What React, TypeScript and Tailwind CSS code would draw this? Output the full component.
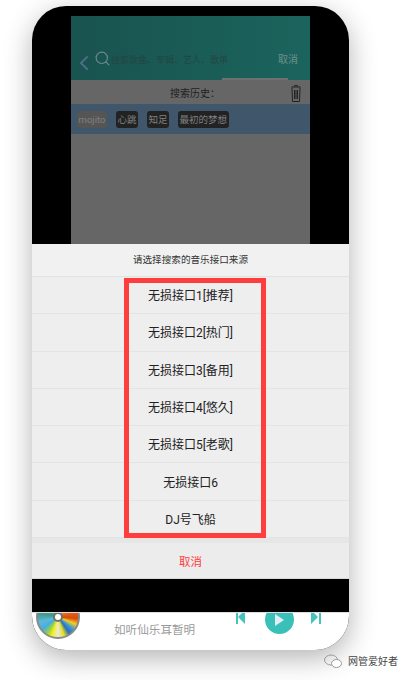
import React from 'react';
import { ChevronLeft, Search } from 'lucide-react';

const FONT = "font-['Roboto','Noto_Sans_CJK_SC',sans-serif]";

const sources = ['无损接口1[推荐]', '无损接口2[热门]', '无损接口3[备用]', '无损接口4[悠久]', '无损接口5[老歌]', '无损接口6', 'DJ号飞船'];
const history = ['心跳', '知足', '最初的梦想'];

const DimmedScreen = () => (
  <div className="mx-[39px] mt-[10px] h-[228px] bg-[#666666] flex flex-col">
    <div className="h-[64px] bg-gradient-to-r from-[#19534f] to-[#1b645d] flex items-end pb-[5px] pl-[1px] pr-[12px]">
      <ChevronLeft className="w-[24px] h-[24px] text-[#4f6a8a]" strokeWidth={2} />
      <Search className="w-[17px] h-[17px] text-[#6f8b88] ml-[-2px] mb-[8px]" strokeWidth={1.6} />
      <span className="text-[9px] leading-[14px] text-[#234643] mb-[8px]">搜索歌曲、专辑、艺人、歌单</span>
      <span className="ml-auto text-[10px] leading-[14px] text-[#6f908b] mb-[8px]">取消</span>
    </div>
    <div className="h-[24px] flex items-center relative">
      <div className="absolute left-[151px] top-[-2px] w-[66px] h-[2px] bg-[#6f7170]" />
      <span className="ml-[99px] mt-[3px] text-[10px] text-[#1f1f1f]">搜索历史：</span>
      <svg className="ml-auto mr-[9px] mt-[3px]" width="10" height="17" viewBox="0 0 10 17" fill="none" stroke="#222222" strokeWidth="1">
        <path d="M3.5 1.5V.5h3v1 M.5 2h9 M1 2.5l.5 14h7l.5-14 M3.5 5v9 M5 5v9 M6.5 5v9" />
      </svg>
    </div>
    <div className="h-[30px] bg-[#3f566b] flex items-center pl-[6px] gap-[9px]">
      <span className="w-[30px] h-[17px] rounded-[3px] bg-[#555555] text-[#808080] text-[9.5px] leading-[17px] text-center">mojito</span>
      {history.map(h => (
        <span key={h} className="h-[17px] px-[1.5px] rounded-[3px] bg-[#222222] text-[#808080] text-[9.5px] leading-[17px]">{h}</span>
      ))}
    </div>
  </div>
);

const SourceSheet = () => (
  <div className="relative bg-[#eeeeee] h-[335px] flex flex-col">
    <div className="h-[33px] bg-[#f1f1f1] border-b border-[#e2e2e2] flex items-center justify-center text-[9.6px] text-[#333333]">
      请选择搜索的音乐接口来源
    </div>
    {sources.map(s => (
      <div key={s} className="h-[37.3px] pt-[2px] border-b border-[#e4e4e4] flex items-center justify-center text-[12px] text-[#222222]">{s}</div>
    ))}
    <div className="h-[5px] bg-[#e6e6e6]" />
    <div className="flex-1 pt-[4px] bg-[#ececec] border-b border-[#d8d8d8] flex items-center justify-center text-[11.5px] text-[#ff3b3b]">取消</div>
    <div className="absolute left-[92px] top-[34px] w-[142px] h-[260px] border-[5px] border-[#ff3d3d]" />
  </div>
);

const PlayerBar = () => (
  <div className="flex-1 bg-white border-t border-[#dddddd] overflow-hidden flex items-start">
    <div className="ml-[4px] mt-[-18px] w-[44px] h-[44px] shrink-0 rounded-full border-2 border-[#8a8a8a] flex items-center justify-center bg-[conic-gradient(#b0b0a8_0deg,#d8a040_35deg,#e86a10_65deg,#d84a10_95deg,#f4d020_112deg,#3a98d8_130deg,#2a70b8_145deg,#e8e020_162deg,#e8e8e0_180deg,#f0f020_198deg,#a0d040_212deg,#40b0e0_232deg,#60b8d8_255deg,#3f9a90_280deg,#50a080_320deg,#b0b0a8_360deg)]">
      <div className="w-[10px] h-[10px] rounded-full bg-white border-2 border-[#707070]" />
    </div>
    <span className="ml-[34px] mt-[9px] text-[11.6px] leading-[16px] text-[#9a9a9a]">如听仙乐耳暂明</span>
    <svg className="ml-[41px] mt-[-3px] shrink-0" width="10" height="14" viewBox="0 0 10 14">
      <path d="M0 0h2v14H0z M9 0v14L2 7z" fill="#45c4bc" />
    </svg>
    <div className="ml-[19px] mt-[-8px] w-[29px] h-[29px] shrink-0 rounded-full bg-[#39c0b8] flex items-center justify-center">
      <svg width="9" height="12" viewBox="0 0 9 12"><path d="M0 0l9 6-9 6z" fill="#e6ecf5" /></svg>
    </div>
    <svg className="ml-[17px] mt-[-3px] shrink-0" width="10" height="14" viewBox="0 0 10 14">
      <path d="M0 0v14l7-7z M8 0h2v14H8z" fill="#45c4bc" />
    </svg>
  </div>
);

export default function App() {
  return (
    <div className={`relative w-[410px] h-[680px] bg-white overflow-hidden ${FONT}`}>
      <div className="ml-[32px] mt-[6px] w-[317px] h-[644px] rounded-[34px] bg-black overflow-hidden flex flex-col shadow-[0_8px_28px_rgba(0,0,0,0.3)]">
        <DimmedScreen />
        <SourceSheet />
        <div className="h-[33px] shrink-0 bg-black" />
        <PlayerBar />
      </div>
      <div className="absolute left-[324px] top-[654px] flex items-center gap-[6px]">
        <svg width="18" height="15" viewBox="0 0 18 15" fill="none" stroke="#9a9a9a" strokeWidth="1">
          <ellipse cx="7" cy="6" rx="6.5" ry="5" />
          <ellipse cx="12.5" cy="9.5" rx="5" ry="4" fill="#ffffff" />
        </svg>
        <span className="text-[10px] text-[#444444]">网管爱好者</span>
      </div>
    </div>
  );
}
